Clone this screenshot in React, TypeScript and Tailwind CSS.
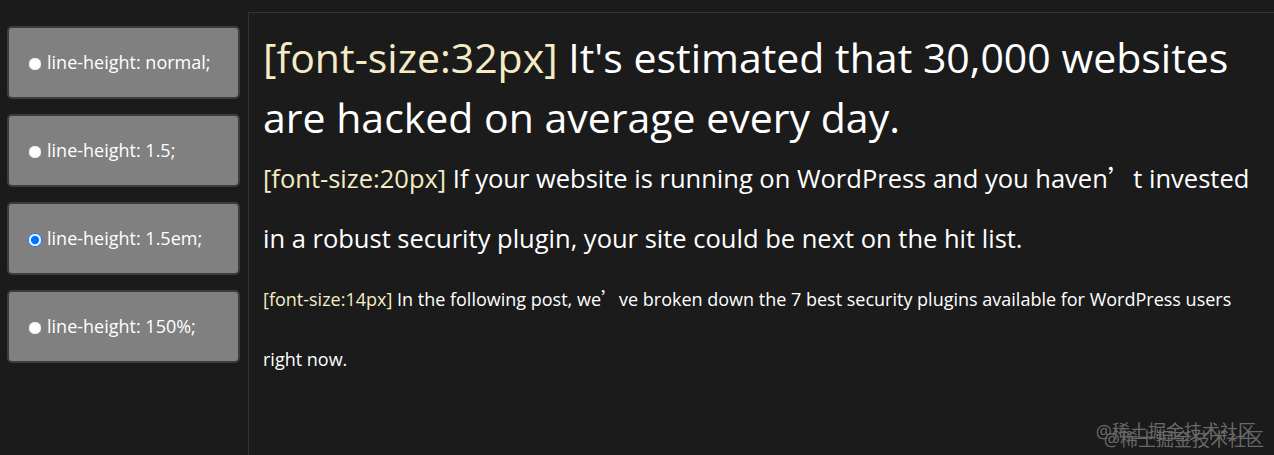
import React, { useState } from 'react';

const options = [
  'line-height: normal;',
  'line-height: 1.5;',
  'line-height: 1.5em;',
  'line-height: 150%;',
];

const Tag: React.FC<{ children: React.ReactNode }> = ({ children }) => (
  <span className="text-[#f5ebc4]">{children}</span>
);

// fullwidth-looking apostrophe as it shows up in the source
const Apos = () => <span style={{ fontFamily: '"Noto Sans CJK SC", sans-serif' }}>’</span>;

export default function App() {
  const [selected, setSelected] = useState(2);

  return (
    <div className="w-[1274px] h-[455px] bg-[#1b1b1b] flex overflow-hidden relative font-['Open_Sans','Noto_Sans_CJK_SC',sans-serif]">
      <div className="w-[248px] shrink-0 pt-[26px] pl-[7px] pr-[8px] flex flex-col gap-[15px]">
        {options.map((opt, i) => (
          <label
            key={opt}
            className="h-[73px] bg-[#808080] border-2 border-[#3c3c3c] rounded-[5px] flex items-center pl-[15px] text-white text-[18px] cursor-pointer"
          >
            <input
              type="radio"
              name="lh"
              checked={selected === i}
              onChange={() => setSelected(i)}
              className="w-[14px] h-[14px] ml-[4px] mr-[5px] mt-[3px]"
            />
            <span>{opt}</span>
          </label>
        ))}
      </div>

      <div className="flex-1 mt-[12px] border-l border-t border-[#333333] pl-[14px] pr-[14px] pt-[14px] text-white leading-[60px]">
        <p className="text-[41px]">
          <Tag>[font-size:32px]</Tag> It's estimated that 30,000 websites are hacked on average every day.
        </p>
        <p className="text-[25.5px]">
          <Tag>[font-size:20px]</Tag> If your website is running on WordPress and you haven<Apos />t invested in a robust security plugin, your site could be next on the hit list.
        </p>
        <p className="text-[18px]">
          <Tag>[font-size:14px]</Tag> In the following post, we<Apos />ve broken down the 7 best security plugins available for WordPress users right now.
        </p>
      </div>

      <div className="absolute right-[18px] bottom-[15px] text-[18px] leading-none text-[#8a8a8a] opacity-70 pointer-events-none">
        <span className="absolute left-[8px] top-[8px] whitespace-nowrap">@稀土掘金技术社区</span>
        <span className="whitespace-nowrap">@稀土掘金技术社区</span>
      </div>
    </div>
  );
}
